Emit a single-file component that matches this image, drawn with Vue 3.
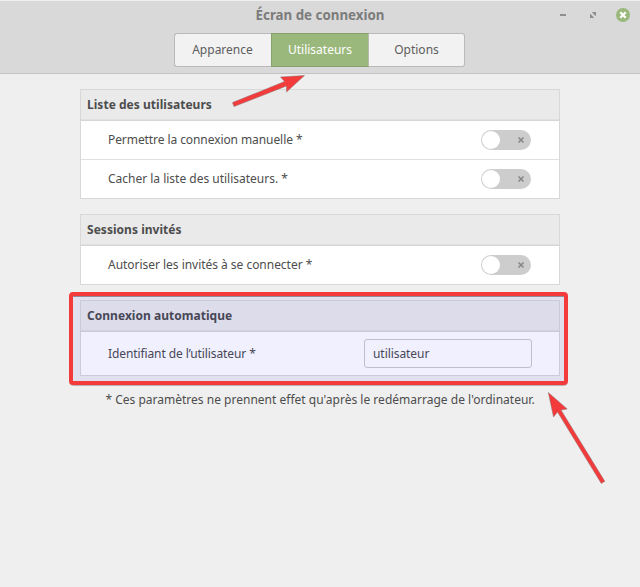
<script setup>
import { ref } from 'vue'

const tabs = ['Apparence', 'Utilisateurs', 'Options']
const activeTab = ref('Utilisateurs')
const username = ref('utilisateur')
const sections = [
  {
    title: 'Liste des utilisateurs',
    rows: [
      { label: 'Permettre la connexion manuelle *', tracking: -0.08 },
      { label: 'Cacher la liste des utilisateurs. *', tracking: -0.01 },
    ],
  },
  { title: 'Sessions invités', rows: [{ label: 'Autoriser les invités à se connecter *', tracking: -0.03 }] },
]
</script>

<template>
  <div class="window">
    <header class="header">
      <div class="titlebar">
        <h1>Écran de connexion</h1>
        <div class="controls">
          <svg width="14" height="14" viewBox="0 0 14 14"><rect x="4" y="6" width="6" height="2" fill="#8e8e8e" /></svg>
          <svg width="14" height="14" viewBox="0 0 14 14"><path d="M6 4h4v4L8.700 7.200 6.800 5.300zM4 6l1.300.8 1.900 1.900L8 10H4z" fill="#8e8e8e" /></svg>
          <svg width="14" height="14" viewBox="0 0 14 14"><circle cx="7" cy="7" r="7" fill="#9ab87c" /><path d="M4.300 4.300l5.400 5.400M9.700 4.300L4.300 9.700" stroke="#fff" stroke-width="2.300" /></svg>
        </div>
      </div>
      <nav class="tabs">
        <button v-for="tab in tabs" :key="tab" :class="{ active: tab === activeTab }" @click="activeTab = tab">{{ tab }}</button>
      </nav>
    </header>

    <main class="content">
      <section v-for="section in sections" :key="section.title" class="panel">
        <h2>{{ section.title }}</h2>
        <div v-for="row in section.rows" :key="row.label" class="row">
          <span :style="{ letterSpacing: row.tracking + 'px' }">{{ row.label }}</span>
          <span class="switch">
            <i class="knob"></i>
            <svg width="6" height="6" viewBox="0 0 6 6"><path d="M.5.5l5 5M5.500.5l-5 5" stroke="#858585" stroke-width="1.500" /></svg>
          </span>
        </div>
      </section>
      <section class="panel marked">
        <h2>Connexion automatique</h2>
        <div class="row tall">
          <span class="field-label">Identifiant de l’utilisateur *</span>
          <input v-model="username" type="text" />
        </div>
        <div class="highlight"></div>
      </section>
      <p class="note">* Ces paramètres ne prennent effet qu'après le redémarrage de l'ordinateur.</p>
    </main>

    <svg class="arrows" width="640" height="587" viewBox="0 0 640 587">
      <g fill="#f43b3b" stroke="#8a7373" stroke-width=".5">
        <path d="M304.500 75.500L280.500 77L284.500 81.500L232.500 102.600L234 106.600L286.500 86L286.500 92Z" />
        <path d="M548.300 392.500L553.500 417L557.500 412L601.300 483.500L604.800 481.300L561 410L567.200 409Z" />
      </g>
    </svg>
  </div>
</template>

<style>
body {
  margin: 0;
}
</style>

<style scoped>
.window {
  position: relative;
  box-sizing: border-box;
  width: 640px;
  height: 587px;
  overflow: hidden;
  background: #efefef;
  color: #4d4d4d;
  font: 12px/18px "Noto Sans", sans-serif;
}
.header {
  box-sizing: border-box;
  height: 74px;
  background: #d9d9d9;
  border-top: 1px solid #efefef;
  border-bottom: 1px solid #c3c3c3;
}
.titlebar {
  display: grid;
  grid-template-columns: 1fr auto 1fr;
  align-items: center;
  height: 27px;
  padding-right: 10px;
}
h1 {
  grid-column: 2;
  margin: 1px 0 0 10px;
  font-size: 13.33px;
  line-height: 20px;
  font-weight: 700;
  color: #7c7c7c;
}
.controls {
  display: flex;
  justify-content: flex-end;
  gap: 16px;
}
.tabs {
  display: grid;
  grid-template-columns: 97px 98px 96px;
  width: 291px;
  margin: 5px 0 0 174px;
}
button {
  box-sizing: border-box;
  height: 34px;
  padding: 0 0 1px;
  border: 1px solid #b9b9b9;
  background: #f2f2f2;
  color: #5d5d5d;
  font: inherit;
}
button:first-child {
  padding-right: 1px;
  border-right: 0;
  border-radius: 3px 0 0 3px;
}
button:last-child {
  border-left: 0;
  border-radius: 0 3px 3px 0;
}
button.active {
  border-color: #87a36b #b3bda9 #87a36b #87a36b;
  background: #9ab87c;
  color: #fff;
}
.content {
  display: flex;
  flex-direction: column;
  gap: 15px;
  width: 480px;
  padding: 15px 80px 0;
}
.panel {
  border: 1px solid #d8d8d8;
  background: #fff;
}
h2 {
  box-sizing: border-box;
  height: 31px;
  margin: 0;
  padding: 6px;
  border-bottom: 1px solid #d6d6d6;
  box-shadow: inset 0 -1px #e1e1e1;
  background: #eaeaea;
  font-size: 12px;
  line-height: 18px;
  font-weight: 700;
  letter-spacing: 0.03px;
}
.row {
  box-sizing: border-box;
  display: flex;
  align-items: center;
  justify-content: space-between;
  height: 38px;
  padding: 0 28px 0 27px;
}
.row + .row {
  height: 39px;
  border-top: 1px solid #e0e0e0;
}
.row.tall {
  height: 43px;
  padding-right: 27px;
}
.field-label {
  letter-spacing: -0.1px;
}
.switch {
  box-sizing: border-box;
  display: flex;
  align-items: center;
  justify-content: space-between;
  width: 50px;
  height: 20px;
  padding: 0 7px 0 1px;
  border-radius: 10px;
  background: #cdcdcd;
}
.knob {
  width: 18px;
  height: 18px;
  border-radius: 50%;
  background: #fff;
}
input {
  box-sizing: border-box;
  width: 168px;
  height: 29px;
  padding: 0 8px;
  border: 1px solid #cbcbcb;
  border-radius: 3px;
  background: #fff;
  color: inherit;
  font: inherit;
  letter-spacing: -0.06px;
}
.marked {
  position: relative;
}
.highlight {
  position: absolute;
  inset: -9px -9px -10px -12px;
  box-sizing: border-box;
  border: 4px solid #f43b3b;
  border-radius: 4px;
  background: rgba(0, 0, 255, 0.06);
  background-clip: padding-box;
  box-shadow: 0 1px 0 -0.5px #8a7373, inset 0 1px #918b9d;
  pointer-events: none;
}
.note {
  margin: 0;
  text-align: center;
  letter-spacing: 0.01px;
}
.arrows {
  position: absolute;
  inset: 0;
  pointer-events: none;
}
</style>
